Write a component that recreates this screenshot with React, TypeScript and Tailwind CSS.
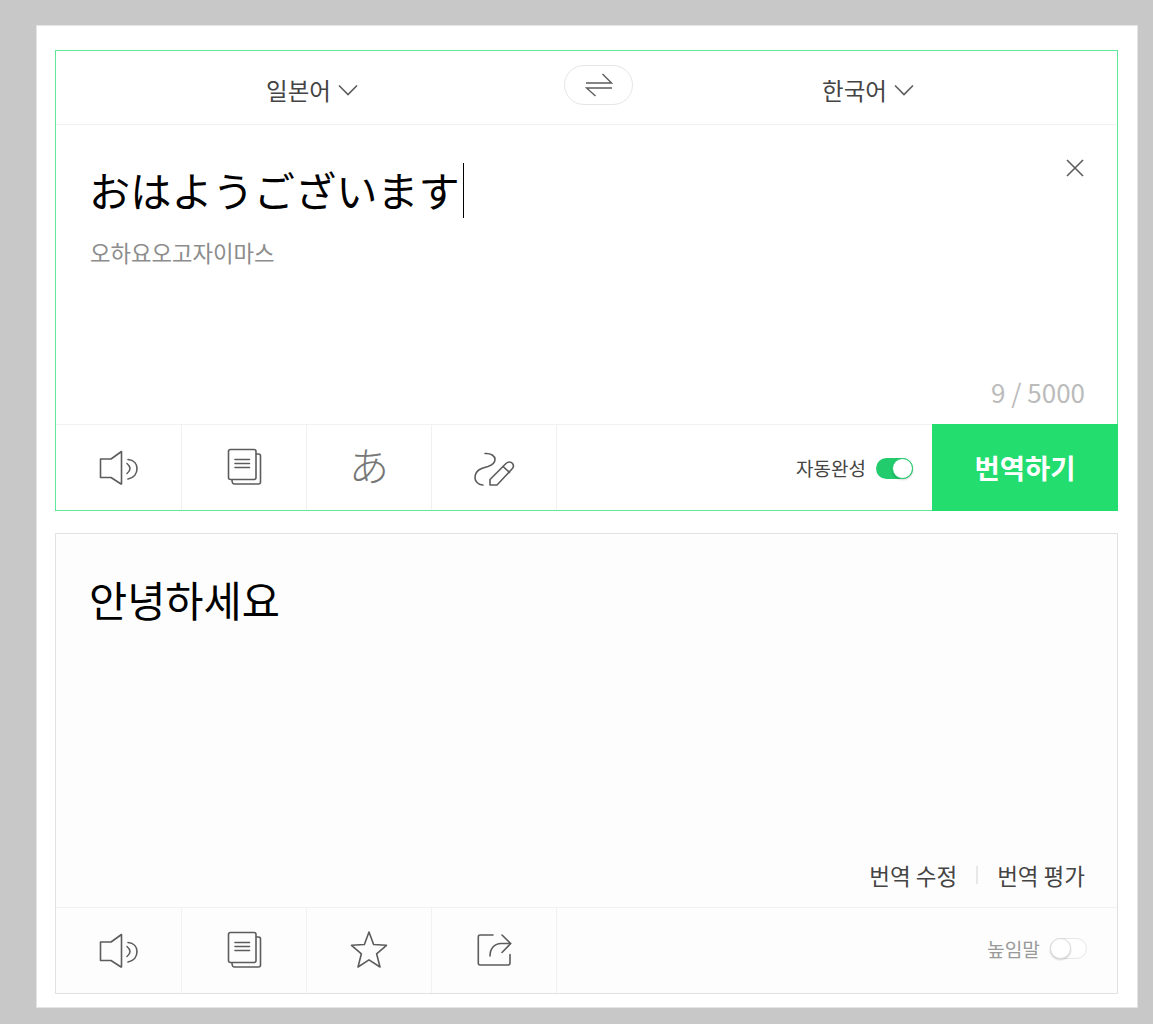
import React from "react";

const F = "font-['Noto_Sans_CJK_KR','Noto_Sans',sans-serif]";

function Speaker() {
  return (
    <svg width="40" height="40" viewBox="0 0 40 40" fill="none" stroke="#5c5c5c" strokeWidth="1.6" strokeLinejoin="round" strokeLinecap="round">
      <path d="M1.5 11H12L22.5 3.5V36H22L12 29.5H1.5Z" />
      <path d="M28 15.5Q34 20.5 28 25.5" />
      <path d="M29 11.5C35 12 38 16 38 20.5C38 25.5 35 30 29 31" />
    </svg>
  );
}

function Doc() {
  return (
    <svg width="40" height="40" viewBox="0 0 40 40" fill="none" stroke="#5c5c5c" strokeWidth="1.6" strokeLinejoin="round" strokeLinecap="round">
      <rect x="4.5" y="1.5" width="27.5" height="30" rx="2" />
      <path d="M32.5 6H34.5C36 6 36.5 7 36.5 8V34C36.5 35.5 36 36 34.5 36H10.5C9 36 8 35 8 32" />
      <path d="M11 11.5H25.5M11 15.5H25.5M11 19.5H25.5" />
    </svg>
  );
}

function Pen() {
  return (
    <svg width="42" height="40" viewBox="0 0 42 40" fill="none" stroke="#5c5c5c" strokeWidth="1.6" strokeLinejoin="round" strokeLinecap="round">
      <path d="M12 5.5C18 5 22 8 22 11.5C22 15 19 17 15 18.5C10 20 2 21 2 30C2 34 6 37 10 37" />
      <path d="M17 37V31.5L33 15.5C35 13.5 38 13.5 39.5 15.5C41 17.5 40.5 19.5 39 21L24 37Z" />
      <path d="M30 18.5L36.5 24.5" />
    </svg>
  );
}

function Star() {
  return (
    <svg width="40" height="40" viewBox="0 0 40 40" fill="none" stroke="#5c5c5c" strokeWidth="1.6" strokeLinejoin="round">
      <path d="M20 1L24.6 13.5L37.5 14.3L27.6 22.8L31 36L20 28.8L9 36L12.4 22.8L2.5 14.3L15.4 13.5Z" />
    </svg>
  );
}

function Share() {
  return (
    <svg width="40" height="40" viewBox="0 0 40 40" fill="none" stroke="#5c5c5c" strokeWidth="1.6" strokeLinejoin="round" strokeLinecap="round">
      <path d="M19 4H6C5 4 4.3 5 4.3 6V32C4.3 33.5 5 34 6 34H34C35.5 34 36 33.5 36 32V23.5" />
      <path d="M16 25C16 17 21 12.5 27 12.5H36.5" />
      <path d="M28 4L36.7 12.5L28 21.5" />
    </svg>
  );
}

function Cell({ children }: { children: React.ReactNode }) {
  return (
    <div className="flex w-[125px] shrink-0 items-center justify-center border-r border-[#f1f1f1]">
      {children}
    </div>
  );
}

function Chevron() {
  return (
    <svg className="mb-[2px]" width="20" height="12" viewBox="0 0 20 12" fill="none" stroke="#5c5c5c" strokeWidth="1.6">
      <path d="M1 1.5L10 10.5L19 1.5" />
    </svg>
  );
}

export default function App() {
  return (
    <div className={`${F} min-h-[1024px] w-[1153px] bg-[#c8c8c8] pt-[25px] pl-[36px]`}>
      <div className="h-[983px] w-[1102px] border border-[#e4e4e4] bg-white pt-[24px] pl-[18px]">
        {/* Source panel */}
        <div className="flex h-[461px] w-[1063px] flex-col border border-[#5fe899] bg-white">
          <div className="flex h-[74px] shrink-0 border-b border-[#f1f1f1]">
            <div className="flex w-[508px] items-center justify-center gap-[7px] pt-[6px] pl-[4px] text-[23.5px] text-[#444]">
              일본어
              <Chevron />
            </div>
            <div className="mt-[14px] flex h-[40px] w-[69px] shrink-0 items-center justify-center rounded-[20px] border border-[#e6e6e6]">
              <svg width="28" height="24" viewBox="0 0 28 24" fill="none" stroke="#5c5c5c" strokeWidth="1.4">
                <path d="M1 10H26.5L17.5 1" />
                <path d="M27 15H1.5L10.5 23" />
              </svg>
            </div>
            <div className="flex flex-1 items-center justify-center gap-[7px] pt-[6px] pr-[14px] text-[23.5px] text-[#444]">
              한국어
              <Chevron />
            </div>
          </div>
          <div className="flex min-h-0 flex-1 flex-col pt-[34px] pr-[33px] pl-[34px]">
            <div className="flex items-start justify-between">
              <div className="flex h-[60px] items-center font-['Noto_Sans_CJK_JP','Noto_Sans',sans-serif] text-[41.2px] leading-[60px] text-black">
                <span className="-ml-[1px]">おはようございます</span>
                <span className="mt-[3px] ml-[3px] h-[55px] w-[1.5px] bg-black" />
              </div>
              <svg width="18" height="18" viewBox="0 0 18 18" fill="none" stroke="#5c5c5c" strokeWidth="1.6"><path d="M1 1L17 17M17 1L1 17" /></svg>
            </div>
            <div className="mt-[18px] text-[22.3px] leading-[30px] text-[#8c8c8c]">오하요오고자이마스</div>
            <div className="mt-auto mb-[16px] -mr-px text-right text-[26px] leading-[32px] font-normal text-[#bbb]">9 / 5000</div>
          </div>
          <div className="flex h-[86px] shrink-0 border-t border-[#f1f1f1] pl-px">
            <Cell><Speaker /></Cell>
            <Cell><Doc /></Cell>
            <Cell><span className="pb-[8px] font-['Noto_Sans_CJK_JP',sans-serif] text-[40px] leading-none font-light text-[#777]">あ</span></Cell>
            <Cell><Pen /></Cell>
            <div className="flex flex-1 items-center justify-end gap-[10px] pr-[19px]">
              <span className="mt-[2px] text-[19px] text-[#444]">자동완성</span>
              <div className="mt-[2px] flex h-[21px] w-[37px] justify-end rounded-full bg-[#22cc6c]">
                <div className="h-[21px] w-[21px] rounded-full border border-[#22cc6c] bg-white shadow-[0_1px_2px_rgba(0,0,0,0.2)]" />
              </div>
            </div>
            <div className="mt-[-1px] mr-[-1px] mb-[-1px] flex w-[186px] items-center justify-center bg-[#23dd6f] text-[27.5px] font-bold text-white">
              번역하기
            </div>
          </div>
        </div>
        {/* Target panel */}
        <div className="mt-[22px] flex h-[461px] w-[1063px] flex-col border border-[#e1e1e1] bg-[#fdfdfd]">
          <div className="flex min-h-0 flex-1 flex-col pt-[35px] pr-[32px] pl-[33px]">
            <div className="text-[41.5px] leading-[60px] text-black">안녕하세요</div>
            <div className="mt-auto mb-[17px] flex items-center justify-end text-[22.5px] leading-[30px] text-[#444]">
              <span>번역 수정</span>
              <span className="mx-[19px] h-[18px] w-[2px] bg-[#e8e8e8]" />
              <span>번역 평가</span>
            </div>
          </div>
          <div className="flex h-[86px] shrink-0 border-t border-[#f1f1f1] pl-px">
            <Cell><Speaker /></Cell>
            <Cell><Doc /></Cell>
            <Cell><Star /></Cell>
            <Cell><Share /></Cell>
            <div className="flex flex-1 items-center justify-end gap-[10px] pr-[30px]">
              <span className="mb-[2px] text-[19.2px] text-[#999]">높임말</span>
              <div className="mb-[5px] flex h-[21px] w-[37px] rounded-full border border-[#e6e6e6] bg-white">
                <div className="-m-px h-[21px] w-[21px] rounded-full border border-[#ddd] bg-white shadow-[0_1px_2px_rgba(0,0,0,0.2)]" />
              </div>
            </div>
          </div>
        </div>
      </div>
    </div>
  );
}
